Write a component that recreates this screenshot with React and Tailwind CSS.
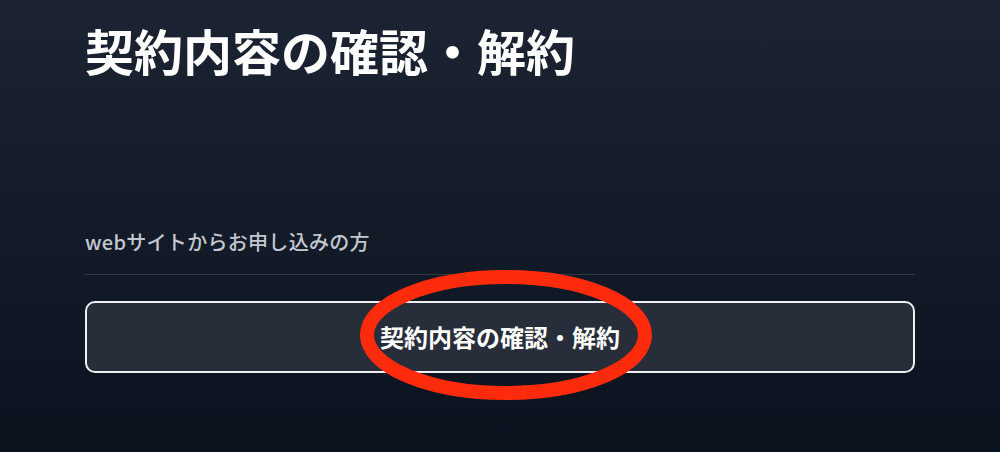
const Highlight = () => (
  <svg
    className="pointer-events-none absolute left-1/2 top-1/2 -translate-x-[144px] -translate-y-[70px]"
    width="300"
    height="136"
    viewBox="0 0 300 136"
  >
    <ellipse cx="150" cy="68" rx="139" ry="58" fill="none" stroke="#ff2b0c" strokeWidth="14" />
  </svg>
)

const App = () => {
  return (
    <div
      className="h-[452px] w-[1000px] overflow-hidden bg-gradient-to-b from-[#1c2433] to-[#0b131f] px-[85px] pt-[13px]"
      style={{ fontFamily: '"Noto Sans CJK JP", "Noto Sans", sans-serif' }}
    >
      {/* Page Header */}
      <h1 className="text-[49px] font-bold leading-[1.5] text-white">契約内容の確認・解約</h1>

      {/* Web applicants */}
      <div className="mt-[140px]">
        <p className="text-[20px] font-medium leading-[1.5] tracking-[0.3px] text-[#c3c7cf]">
          webサイトからお申し込みの方
        </p>
        <div className="mt-[17px] h-px w-full bg-[#2f3746]"></div>
        <div className="relative mt-[26px]">
          <button className="flex h-[72px] w-full items-center justify-center rounded-[10px] border-2 border-[#eef0f3] bg-[#282d3a] text-[24px] font-bold text-white">
            契約内容の確認・解約
          </button>
          <Highlight />
        </div>
      </div>
    </div>
  )
}

export default App
